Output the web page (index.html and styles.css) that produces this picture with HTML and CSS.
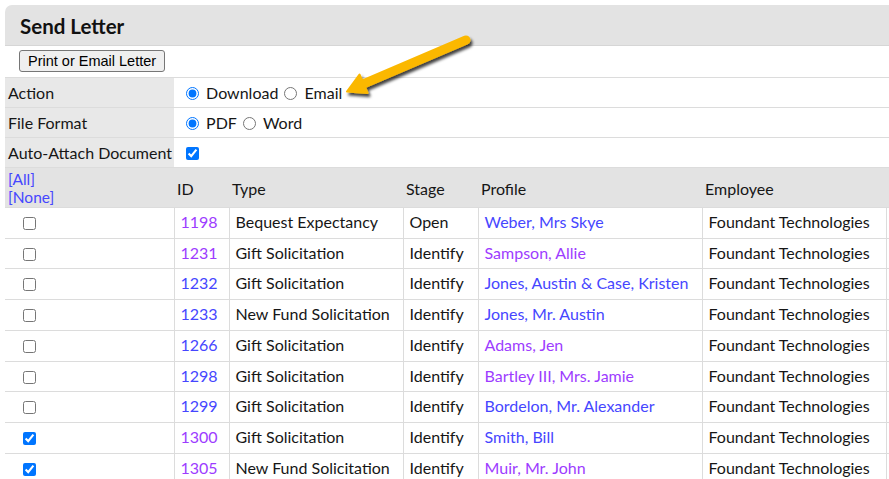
FILE: index.html
```html
<!DOCTYPE html>
<html>
<head>
  <title>Send Letter</title>
  <link rel="stylesheet" href="styles.css">
</head>
<body>
  <div class="panel">
    <div class="panel-title">Send Letter</div>
    <table class="letter">
      <colgroup>
        <col class="c-check">
        <col class="c-id">
        <col class="c-type">
        <col class="c-stage">
        <col class="c-profile">
        <col class="c-emp">
        <col class="c-extra">
      </colgroup>
      <tr class="btn-row">
        <td colspan="7"><button type="button">Print or Email Letter</button></td>
      </tr>
      <tr class="opt">
        <th>Action</th>
        <td colspan="6">
          <label><input type="radio" name="action" checked> Download</label>
          <label><input type="radio" name="action"> Email</label>
        </td>
      </tr>
      <tr class="opt">
        <th>File Format</th>
        <td colspan="6">
          <label><input type="radio" name="format" checked> PDF</label>
          <label><input type="radio" name="format"> Word</label>
        </td>
      </tr>
      <tr class="opt">
        <th>Auto-Attach Document</th>
        <td colspan="6"><input type="checkbox" checked></td>
      </tr>
      <tr class="head">
        <th><a href="#">[All]</a><br><a href="#">[None]</a></th>
        <th>ID</th>
        <th>Type</th>
        <th>Stage</th>
        <th>Profile</th>
        <th>Employee</th>
        <th></th>
      </tr>
      <tr>
        <td class="chk"><input type="checkbox"></td>
        <td><a class="seen" href="#">1198</a></td>
        <td>Bequest Expectancy</td>
        <td>Open</td>
        <td><a href="#">Weber, Mrs Skye</a></td>
        <td>Foundant Technologies</td>
        <td></td>
      </tr>
      <tr>
        <td class="chk"><input type="checkbox"></td>
        <td><a class="seen" href="#">1231</a></td>
        <td>Gift Solicitation</td>
        <td>Identify</td>
        <td><a class="seen" href="#">Sampson, Allie</a></td>
        <td>Foundant Technologies</td>
        <td></td>
      </tr>
      <tr>
        <td class="chk"><input type="checkbox"></td>
        <td><a href="#">1232</a></td>
        <td>Gift Solicitation</td>
        <td>Identify</td>
        <td><a href="#">Jones, Austin &amp; Case, Kristen</a></td>
        <td>Foundant Technologies</td>
        <td></td>
      </tr>
      <tr>
        <td class="chk"><input type="checkbox"></td>
        <td><a href="#">1233</a></td>
        <td>New Fund Solicitation</td>
        <td>Identify</td>
        <td><a href="#">Jones, Mr. Austin</a></td>
        <td>Foundant Technologies</td>
        <td></td>
      </tr>
      <tr>
        <td class="chk"><input type="checkbox"></td>
        <td><a href="#">1266</a></td>
        <td>Gift Solicitation</td>
        <td>Identify</td>
        <td><a class="seen" href="#">Adams, Jen</a></td>
        <td>Foundant Technologies</td>
        <td></td>
      </tr>
      <tr>
        <td class="chk"><input type="checkbox"></td>
        <td><a href="#">1298</a></td>
        <td>Gift Solicitation</td>
        <td>Identify</td>
        <td><a class="seen" href="#">Bartley III, Mrs. Jamie</a></td>
        <td>Foundant Technologies</td>
        <td></td>
      </tr>
      <tr>
        <td class="chk"><input type="checkbox"></td>
        <td><a href="#">1299</a></td>
        <td>Gift Solicitation</td>
        <td>Identify</td>
        <td><a href="#">Bordelon, Mr. Alexander</a></td>
        <td>Foundant Technologies</td>
        <td></td>
      </tr>
      <tr>
        <td class="chk"><input type="checkbox" checked></td>
        <td><a class="seen" href="#">1300</a></td>
        <td>Gift Solicitation</td>
        <td>Identify</td>
        <td><a href="#">Smith, Bill</a></td>
        <td>Foundant Technologies</td>
        <td></td>
      </tr>
      <tr>
        <td class="chk"><input type="checkbox" checked></td>
        <td><a class="seen" href="#">1305</a></td>
        <td>New Fund Solicitation</td>
        <td>Identify</td>
        <td><a class="seen" href="#">Muir, Mr. John</a></td>
        <td>Foundant Technologies</td>
        <td></td>
      </tr>
    </table>
  </div>

  <!-- callout arrow pointing at the Email option -->
  <svg class="callout" width="889" height="120" viewBox="0 0 889 120">
    <defs>
      <filter id="shade" x="-20%" y="-40%" width="140%" height="180%">
        <feDropShadow dx="2" dy="3" stdDeviation="1.4" flood-color="#000" flood-opacity="0.75"/>
      </filter>
    </defs>
    <g filter="url(#shade)" fill="#fbb800" stroke="#fbb800" stroke-linejoin="round">
      <line x1="466" y1="40" x2="362" y2="84.5" stroke-width="9" stroke-linecap="round"/>
      <polygon points="347,91.5 359.5,74.5 367.5,93" stroke-width="2"/>
    </g>
  </svg>
</body>
</html>
```

FILE: styles.css
```css
body {
  margin: 5px 0 0 5px;
  overflow: hidden;
  font-family: Lato, "Noto Sans", sans-serif;
  font-size: 16px;
  color: #161616;
  background: #fff;
}

.panel {
  width: 930px;
}

.panel-title {
  background: #e3e3e3;
  border-top-left-radius: 7px;
  border-bottom: 1px solid #d6d6d6;
  padding: 9px 15px 0;
  height: 31px;
  font-weight: bold;
  font-size: 20.5px;
  color: #111;
}

.letter {
  border-collapse: collapse;
  table-layout: fixed;
  width: 925px;
}

.c-check { width: 169px; }
.c-id { width: 55px; }
.c-type { width: 174px; }
.c-stage { width: 75px; }
.c-profile { width: 224px; }
.c-emp { width: 184px; }
.c-extra { width: 44px; }

.letter td,
.letter th {
  border: 1px solid #dcdcdc;
  padding: 5px 6px 6px;
  line-height: 18.7px;
  text-align: left;
  font-weight: normal;
  white-space: nowrap;
  overflow: hidden;
}

.letter tr > :first-child {
  border-left: none;
}

.btn-row td {
  border-top: none;
  padding: 4px 14px 5px;
  line-height: 22px;
}

.btn-row button {
  font-family: "Liberation Sans", Arial, sans-serif;
  font-size: 14.5px;
  padding: 0 8px;
  height: 22px;
  background: #efefef;
  border: 1px solid #767676;
  border-radius: 3px;
  color: #000;
  vertical-align: top;
}

.opt th {
  background: #e8e8e8;
  padding: 5px 3px 4px;
  border-right: none;
  line-height: 20px;
}

.opt td {
  padding: 5px 11px 4px;
  border-left: none;
  line-height: 20px;
}

.opt label {
  margin-right: 1px;
}

.opt input {
  margin: 0 3px 0 1px;
  vertical-align: -1px;
}

.head th {
  background: #e3e3e3;
  border-left: none;
  border-right: none;
  padding: 2px 3px 1px;
  line-height: 17px;
  height: 33px;
  box-sizing: border-box;
}

.head th:first-child a {
  font-size: 15.5px;
}

.chk {
  padding-left: 18px !important;
}

.chk input {
  margin: 0;
  vertical-align: -2px;
}

a {
  color: #4646ff;
  text-decoration: none;
}

a.seen {
  color: #9d3cff;
}

.callout {
  position: absolute;
  left: 0;
  top: 0;
  pointer-events: none;
}
```
